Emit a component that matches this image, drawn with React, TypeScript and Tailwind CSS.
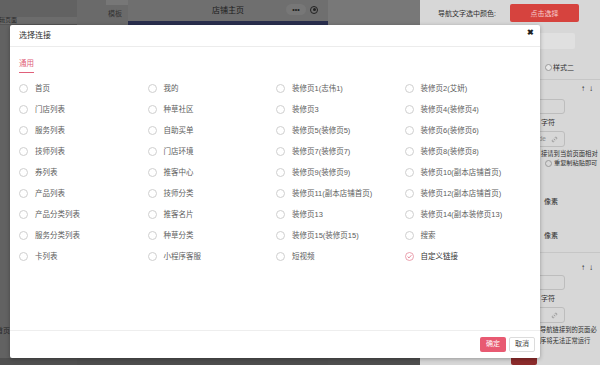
import React from "react";

const rows: string[][] = [
  ["首页", "我的", "装修页1(志伟1)", "装修页2(艾妍)"],
  ["门店列表", "种草社区", "装修页3", "装修页4(装修页4)"],
  ["服务列表", "自助买单", "装修页5(装修页5)", "装修页6(装修页6)"],
  ["技师列表", "门店环境", "装修页7(装修页7)", "装修页8(装修页8)"],
  ["券列表", "推客中心", "装修页9(装修页9)", "装修页10(副本店铺首页)"],
  ["产品列表", "技师分类", "装修页11(副本店铺首页)", "装修页12(副本店铺首页)"],
  ["产品分类列表", "推客名片", "装修页13", "装修页14(副本装修页13)"],
  ["服务分类列表", "种草分类", "装修页15(装修页15)", "搜索"],
  ["卡列表", "小程序客服", "短视频", "自定义链接"],
];

function Radio({ checked }: { checked?: boolean }) {
  if (checked) {
    return (
      <svg width="9" height="9" viewBox="0 0 9 9" className="shrink-0">
        <circle cx="4.5" cy="4.5" r="4" fill="none" stroke="#e58a9b" strokeWidth="0.8" />
        <polyline points="2.6,4.6 4,5.9 6.4,3.2" fill="none" stroke="#e06a80" strokeWidth="0.8" />
      </svg>
    );
  }
  return <span className="block h-[9px] w-[9px] shrink-0 rounded-full border border-[#cfcfcf]" />;
}

function LinkIcon() {
  return (
    <svg width="7" height="7" viewBox="0 0 10 10" fill="none" stroke="#8a8a8a" strokeWidth="1" className="shrink-0">
      <path d="M4 6 L6 4" />
      <path d="M3.2 4.8 L2 6 a1.4 1.4 0 0 0 2 2 L5.2 6.8" />
      <path d="M4.8 3.2 L6 2 a1.4 1.4 0 0 1 2 2 L6.8 5.2" />
    </svg>
  );
}

function Arrows() {
  return (
    <div className="flex h-[12px] items-center justify-end gap-[4px] pr-[7px] text-[8px] font-bold leading-none text-[#1e1e1e]">
      <span>↑</span>
      <span>↓</span>
    </div>
  );
}

function RightPanel() {
  return (
    <div className="flex w-[180px] shrink-0 flex-col bg-[#d7d7d7] text-[7px] leading-none text-[#2f2f2f]">
      <div className="mt-[4px] flex h-[18px] items-center pl-[18px]">
        <span>导航文字选中颜色:</span>
        <span className="ml-[14px] flex h-[18px] w-[69px] items-center justify-center rounded-[2px] bg-[#d6433e] text-[#f7cfcd]">
          点击选择
        </span>
      </div>
      <div className="ml-[85px] mt-[11px] h-[17px] w-[70px] rounded-[2px] bg-[#e0e0e0]" />
      <div className="ml-[125px] mt-[15px] flex items-center gap-[1px]">
        <span className="block h-[7px] w-[7px] rounded-full border border-[#9a9a9a] bg-[#e8e8e8]" />
        样式二
      </div>
      <div className="mt-[8px] border-b border-[#c6c6c6]" />
      <div className="mt-[3px]">
        <Arrows />
      </div>
      <div className="ml-[50px] mt-[4px] h-[17px] w-[95px] rounded-[3px] border border-[#bdbdbd]" />
      <div className="ml-[121px] mt-[5px] whitespace-nowrap">字符</div>
      <div className="ml-[50px] mt-[5px] flex h-[17px] w-[95px] items-center justify-end gap-[5px] rounded-[3px] border border-[#bdbdbd] pr-[6px] text-[6.5px] text-[#8a8a8a]">
        <span className="whitespace-nowrap">ode</span>
        <LinkIcon />
      </div>
      <div className="ml-[121px] mt-[4px] whitespace-nowrap text-[6.3px]">接请到当前页面相对</div>
      <div className="ml-[125px] mt-[2px] flex items-center gap-[2px] whitespace-nowrap text-[6.2px]">
        <span className="block h-[7px] w-[7px] rounded-full border border-[#9a9a9a]" />
        重复制粘贴即可
      </div>
      <div className="ml-[124px] mt-[31px] whitespace-nowrap">像素</div>
      <div className="ml-[124px] mt-[27px] whitespace-nowrap">像素</div>
      <div className="mt-[13px] border-b border-[#c6c6c6]" />
      <div className="mt-[9px]">
        <Arrows />
      </div>
      <div className="ml-[50px] mt-[1px] h-[17px] w-[95px] rounded-[3px] border border-[#bdbdbd]" />
      <div className="ml-[121px] mt-[5px] whitespace-nowrap">字符</div>
      <div className="ml-[50px] mt-[5px] flex h-[17px] w-[95px] items-center justify-end rounded-[3px] border border-[#bdbdbd] pr-[6px]">
        <LinkIcon />
      </div>
      <div className="ml-[120px] mt-[1px] whitespace-nowrap text-[6.3px] leading-[11px]">导航链接到的页面必</div>
      <div className="ml-[120px] whitespace-nowrap text-[6.3px] leading-[11px]">序将无法正常运行</div>
      <div className="ml-[91px] mt-[6px] h-[14px] w-[26px] rounded-[2px] bg-[#8c2b2b]" />
    </div>
  );
}

function Modal() {
  return (
    <div className="absolute left-[10px] top-[25px] flex h-[333px] w-[530px] flex-col rounded-[2px] bg-white text-[7.5px] shadow-[0_1px_4px_rgba(0,0,0,0.3)]">
      <div className="flex h-[22px] shrink-0 items-center justify-between border-b border-[#ececec] pl-[9px] pr-[6px]">
        <span className="text-[8px] text-[#2e2e2e]">选择连接</span>
        <span className="mb-[5px] text-[8px] font-bold text-[#222]">✖</span>
      </div>
      <div className="pl-[9px] pt-[11px]">
        <span className="inline-block border-b-[1.5px] border-[#e0607a] pb-[2px] text-[7.5px] leading-[12px] text-[#e0607a]">
          通用
        </span>
      </div>
      <div className="mt-[5px] grid auto-rows-[21px] grid-cols-[repeat(4,128.5px)] pl-[9px]">
        {rows.map((row, i) =>
          row.map((label, j) => (
            <div key={`${i}-${j}`} className="flex items-center">
              <Radio checked={label === "自定义链接"} />
              <span
                className={
                  "ml-[7px] whitespace-nowrap " +
                  (label === "自定义链接" ? "text-[#333]" : "text-[#5c5c5c]")
                }
              >
                {label}
              </span>
            </div>
          ))
        )}
      </div>
      <div className="flex-1" />
      <div className="flex h-[28px] shrink-0 items-start justify-end gap-[3px] border-t border-[#eeeeee] pr-[5px] pt-[6px]">
        <button className="flex h-[15px] w-[26px] items-center justify-center rounded-[2px] bg-[#e85a72] text-[7px] text-white">
          确定
        </button>
        <button className="flex h-[15px] w-[26px] items-center justify-center rounded-[2px] border border-[#dcdcdc] bg-white text-[7px] text-[#444]">
          取消
        </button>
      </div>
    </div>
  );
}

export default function App() {
  return (
    <div className="relative flex h-[365px] w-[600px] overflow-hidden font-['Liberation_Sans','Noto_Sans_CJK_SC',sans-serif]">
      <div className="flex w-[77px] shrink-0 flex-col bg-[#626262] text-[6px] text-[#2a2a2a]">
        <div className="h-[17px]" />
        <div className="ml-[-9px] flex h-[8px] items-center border-b border-[#555] bg-[#6c6c6c] pl-[2px] whitespace-nowrap">
          编辑页面
        </div>
        <div className="flex-1" />
        <div className="mb-[22px] ml-[-4px] whitespace-nowrap text-[7px]">首页</div>
        <div className="h-[7px] bg-[#505050]" />
      </div>
      <div className="flex w-[51px] shrink-0 flex-col bg-[#6a6a6a] text-[7px] text-[#333]">
        <div className="ml-[29px] h-[5px] w-[22px] bg-[#777]" />
        <div className="ml-[31px] mt-[4px]">模板</div>
        <div className="flex-1" />
        <div className="h-[7px] bg-[#4e4e4e]" />
      </div>
      <div className="flex w-[200px] shrink-0 flex-col bg-[#5e5e5e]">
        <div className="relative flex h-[21px] items-center justify-center bg-[#6f6f6f] text-[8px] text-[#1c1c1c]">
          <span>店铺主页</span>
          <div className="absolute right-[10px] top-[4px] flex items-center gap-[4px]">
            <span className="flex h-[11px] w-[20px] items-center justify-center rounded-full bg-[#777] text-[7px] font-bold leading-none text-[#222]">
              •••
            </span>
            <span className="flex h-[8px] w-[8px] items-center justify-center rounded-full border border-[#222]">
              <span className="block h-[3px] w-[3px] rounded-full bg-[#222]" />
            </span>
          </div>
        </div>
        <div className="h-[4px] bg-[#2a2f4e]" />
        <div className="flex-1" />
        <div className="h-[7px] bg-[#4e4e4e]" />
      </div>
      <div className="flex w-[92px] shrink-0 flex-col bg-[#787878]">
        <div className="flex-1" />
        <div className="h-[7px] bg-[#4f4f4f]" />
      </div>
      <RightPanel />
      <Modal />
    </div>
  );
}
